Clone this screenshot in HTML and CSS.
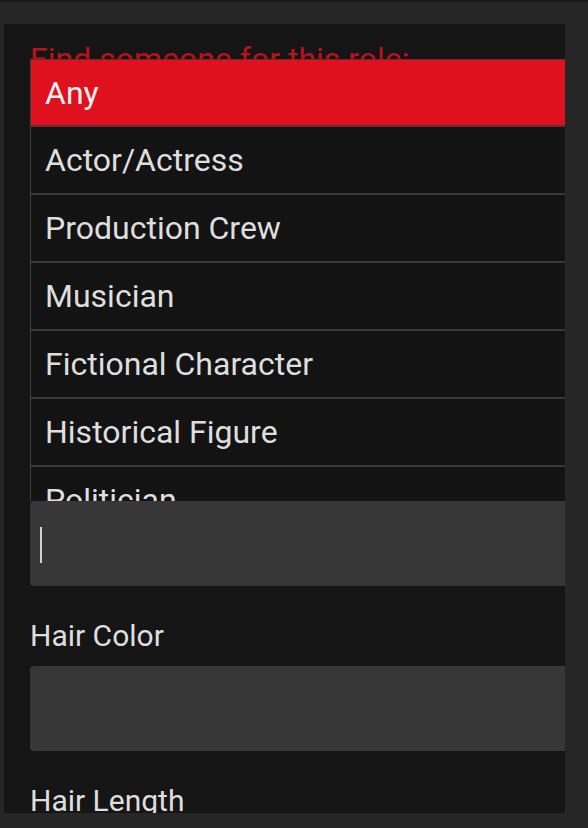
FILE: index.html
```html
<!DOCTYPE html>
<html>
  <head>
    <link rel="stylesheet" href="styles.css">
  </head>
  <body>
    <div class="panel">
      <h2 class="role-title">Find someone for this role:</h2>

      <div class="field first">
        <div class="text-input"><span class="caret"></span></div>
      </div>
      <div class="field">
        <label class="field-label">Hair Color</label>
        <div class="text-input"></div>
      </div>
      <div class="field">
        <label class="field-label">Hair Length</label>
        <div class="text-input"></div>
      </div>

      <ul class="role-menu">
        <li class="role-option selected">Any</li>
        <li class="role-option">Actor/Actress</li>
        <li class="role-option">Production Crew</li>
        <li class="role-option">Musician</li>
        <li class="role-option">Fictional Character</li>
        <li class="role-option">Historical Figure</li>
        <li class="role-option">Politician</li>
        <li class="role-option">Athlete</li>
      </ul>
    </div>
  </body>
</html>
```

FILE: styles.css
```css
html, body {
  margin: 0;
  height: 828px;
  overflow: hidden;
}
body {
  background-color: #262626;
  border-top: 2px solid #1b1b1b;
  box-sizing: border-box;
  padding: 22px 23px 0 4px;
  font-family: Roboto, "Liberation Sans", sans-serif;
  color: #dedede;
}
.panel {
  position: relative;
  height: 789px;
  overflow: hidden;
  background-color: #151515;
  padding: 16px 0 0 26px;
  box-sizing: border-box;
}
.role-title {
  margin: 0;
  font-size: 32px;
  font-weight: 400;
  line-height: 38px;
  color: #b8131c;
}
.field {
  margin-top: 31px;
}
.field.first {
  margin-top: 423px;
}
.field-label {
  display: block;
  margin-bottom: 11px;
  font-size: 30px;
  font-weight: 400;
  line-height: 38px;
}
.text-input {
  height: 85px;
  border-radius: 4px 0 0 4px;
  background-color: #373737;
  padding: 26px 0 0 10px;
  box-sizing: border-box;
}
.caret {
  display: block;
  width: 2px;
  height: 36px;
  background-color: #d0d0d0;
}
.role-menu {
  position: absolute;
  top: 35px;
  left: 26px;
  right: 0;
  height: 442px;
  overflow: hidden;
  margin: 0;
  padding: 0;
  list-style: none;
  background-color: #131313;
  border-left: 1px solid #3e3e3e;
}
.role-option {
  height: 66px;
  line-height: 67px;
  padding-left: 14px;
  border-bottom: 2px solid #393939;
  font-size: 32px;
  font-weight: 400;
  white-space: nowrap;
}
.role-option.selected {
  background-color: #e0111f;
  border-top: 1px solid #6b2a2f;
  border-bottom-color: #6b2a2f;
  height: 65px;
  line-height: 66px;
  color: #f2f2f2;
}
```
